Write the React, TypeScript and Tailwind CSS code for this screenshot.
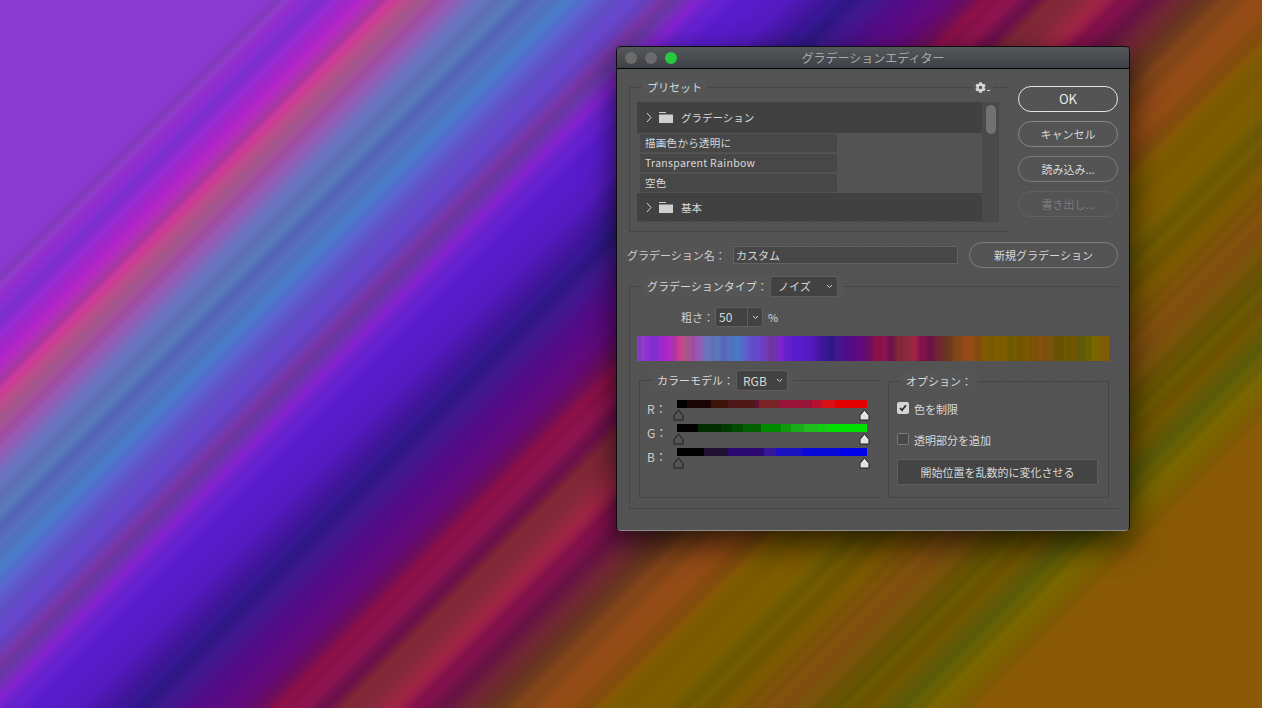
import React from "react";
import { FaCog } from "react-icons/fa";

// noise gradient stops, position is a fraction of the preview bar
const noiseStops: [number, string][] = [
  [0, "#8a3ad0"], [0.012, "#9040c8"], [0.02, "#9a30d8"], [0.035, "#8030d8"], [0.05, "#a02cd8"],
  [0.065, "#b424cc"], [0.078, "#b03ab0"], [0.088, "#cf3a98"], [0.097, "#c0508f"], [0.108, "#b05e98"],
  [0.118, "#a850a8"], [0.132, "#9a62c0"], [0.148, "#6f7ccc"], [0.16, "#6478c4"], [0.172, "#5f80c4"],
  [0.185, "#5a6cc8"], [0.198, "#5a7ccc"], [0.212, "#4c80d0"], [0.226, "#5c68d4"], [0.24, "#6a58d8"],
  [0.255, "#6a4cd8"], [0.268, "#6a40c0"], [0.278, "#7a38a8"], [0.29, "#6e3ab0"], [0.302, "#8a25d8"],
  [0.315, "#6a22d4"], [0.335, "#5a1cd0"], [0.36, "#5a1ccc"], [0.385, "#4a18b0"], [0.408, "#2e188a"],
  [0.425, "#401890"], [0.45, "#5a0c90"], [0.48, "#6a0a80"], [0.496, "#781060"], [0.505, "#90104a"],
  [0.525, "#8f1450"], [0.54, "#701050"], [0.552, "#8a2a3a"], [0.57, "#8f2a40"], [0.586, "#a82848"],
  [0.602, "#8a1050"], [0.622, "#701448"], [0.64, "#7a2a38"], [0.66, "#703a20"], [0.678, "#8a4a18"],
  [0.7, "#a05018"], [0.72, "#8f4f10"], [0.742, "#866200"], [0.77, "#855f00"], [0.79, "#746000"],
  [0.82, "#7c5a00"], [0.86, "#885210"], [0.9, "#6a5a00"], [0.922, "#785a00"], [0.945, "#5c5c08"],
  [0.965, "#7c6a00"], [0.98, "#7e6200"], [1, "#8a5a06"],
];

// the desktop uses the same stops along a 135deg line, starting 268px in and spanning 1418px
const toDesktop = (f: number) => ((268 + 1418 * f) / 1970) * 100;
const toBar = (f: number) => f * 100;

const noiseLayer = (angle: string, at: (f: number) => number) =>
  `linear-gradient(${angle}, ${noiseStops.map(([f, c]) => `${c} ${at(f).toFixed(2)}%`).join(", ")})`;

// fine dark streaks on top of the colour stops, transparent outside the gradient's range
const streakLayer = (angle: string, at: (f: number) => number) => {
  const parts = [`transparent ${at(0).toFixed(2)}%`];
  const count = 150;
  for (let i = 1; i < count; i++) {
    const r = Math.abs(Math.sin(i * 12.9898) * 43758.5453) % 1;
    parts.push(`rgba(0,0,0,${(r * 0.09).toFixed(3)}) ${at(i / count).toFixed(2)}%`);
  }
  parts.push(`transparent ${at(1).toFixed(2)}%`);
  return `linear-gradient(${angle}, ${parts.join(", ")})`;
};

const desktopImage = `${streakLayer("135deg", toDesktop)}, ${noiseLayer("135deg", toDesktop)}`;
const barImage = `${streakLayer("90deg", toBar)}, ${noiseLayer("90deg", toBar)}`;

const bands = (stops: [number, string][]) => {
  const parts: string[] = [];
  let from = 0;
  for (const [to, color] of stops) {
    parts.push(`${color} ${from}% ${to}%`);
    from = to;
  }
  return `linear-gradient(90deg, ${parts.join(", ")})`;
};

const sliders: { label: string; stops: [number, string][] }[] = [
  {
    label: "R",
    stops: [[5, "#000000"], [18, "#1a0505"], [27, "#3a1408"], [41, "#4e1818"], [43, "#5e1038"], [54, "#7a2428"], [71, "#98143a"], [76, "#b81030"], [83, "#d81018"], [100, "#e40000"]],
  },
  {
    label: "G",
    stops: [[11, "#000000"], [23, "#002c00"], [29, "#003a00"], [35, "#004c00"], [44, "#006000"], [55, "#008a00"], [60, "#0f9a0f"], [67, "#1aac1a"], [74, "#20bc20"], [80, "#14cc14"], [100, "#00e000"]],
  },
  {
    label: "B",
    stops: [[14, "#000000"], [27, "#201030"], [46, "#2a0a70"], [52, "#36189a"], [66, "#1a10c0"], [86, "#0808d8"], [100, "#0000e8"]],
  },
];

const Chevron = () => (
  <svg width="7" height="5" viewBox="0 0 7 5" className="shrink-0">
    <path d="M1 1l2.5 2.5L6 1" fill="none" stroke="#d0d0d0" strokeWidth="1" />
  </svg>
);

const FolderRow = ({ name, className }: { name: string; className: string }) => (
  <div className={`flex items-center bg-[#414141] pl-[9px] ${className}`}>
    <svg width="6" height="11" viewBox="0 0 6 11" className="shrink-0">
      <path d="M1 1l4 4.5L1 10" fill="none" stroke="#d8d8d8" strokeWidth="1" />
    </svg>
    <svg width="14" height="11" viewBox="0 0 14 11" className="ml-[7px] shrink-0">
      <path d="M0 0h7v1H0z" fill="#cfcfcf" />
      <path d="M0 2.5h14V11H0z" fill="#cfcfcf" />
    </svg>
    <span className="ml-[8px] text-[10.5px]">{name}</span>
  </div>
);

const PresetItem = ({ name }: { name: string }) => (
  <div className="flex h-[19px] w-[197px] items-center border-b border-[#505050] bg-[#474747] pl-[5px] text-[10.5px] tracking-[0.3px]">
    {name}
  </div>
);

const PillButton = ({ label, className }: { label: string; className: string }) => (
  <div className={`flex items-center justify-center rounded-full border ${className}`}>{label}</div>
);

const Thumb = ({ filled }: { filled: boolean }) => (
  <svg width="11" height="12" viewBox="0 0 11 12" className="shrink-0">
    <path
      d="M5.5 1L10 6.5V11H1V6.5z"
      fill={filled ? "#e2e2e2" : "none"}
      stroke={filled ? "#222222" : "#1c1c1c"}
      strokeWidth="1"
      strokeLinejoin="round"
    />
  </svg>
);

const App: React.FC = () => {
  return (
    <div
      className="relative h-[708px] w-[1262px] overflow-hidden [font-family:'Noto_Sans_CJK_JP','Noto_Sans',sans-serif]"
      style={{ backgroundImage: desktopImage }}
    >
      <div className="absolute left-[616px] top-[46px] flex h-[485px] w-[514px] flex-col overflow-hidden rounded-[5px] border border-[#0c0c0c] border-b-[#8c8c8c] bg-[#535353] bg-[radial-gradient(circle,#575757_1px,transparent_1px)] bg-[length:3px_3px] text-[11px] text-[#d8d8d8] shadow-[0_12px_32px_rgba(0,0,0,0.7)]">
        {/* title bar */}
        <div className="relative flex h-[22px] shrink-0 items-center justify-center border-b border-black bg-gradient-to-b from-[#53575a] to-[#3e4246] text-[12px] text-[#a9a9a9]">
          <div className="absolute left-[8px] top-[5px] flex gap-[8px]">
            <span className="h-[12px] w-[12px] rounded-full bg-[#6b6b6b]" />
            <span className="h-[12px] w-[12px] rounded-full bg-[#6b6b6b]" />
            <span className="h-[12px] w-[12px] rounded-full bg-[#28c840]" />
          </div>
          グラデーションエディター
        </div>

        <div className="flex flex-col pl-[12px]">
          {/* presets and buttons */}
          <div className="mt-[18px] flex">
            <div className="relative h-[145px] w-[380px] border-b border-l border-t border-[#464646] pl-[7px] pt-[14px]">
              <span className="absolute left-[12px] top-[-9px] bg-[#555555] px-[5px] leading-[16px]">プリセット</span>
              <div className="absolute right-[16px] top-[-6px] flex items-end bg-[#555555] px-[3px]">
                <FaCog className="h-[11px] w-[11px] text-[#d8d8d8]" />
                <span className="ml-px mb-[2px] h-px w-[3px] bg-[#d8d8d8]" />
              </div>
              <div className="flex h-[120px] w-[362px] border-b border-r border-[#484848]">
                <div className="flex w-[345px] flex-col">
                  <FolderRow name="グラデーション" className="h-[32px] pt-px" />
                  <div className="flex flex-1 flex-col pl-[3px] pt-px">
                    <PresetItem name="描画色から透明に" />
                    <div className="mt-px">
                      <PresetItem name="Transparent Rainbow" />
                    </div>
                    <div className="mt-px">
                      <PresetItem name="空色" />
                    </div>
                  </div>
                  <FolderRow name="基本" className="h-[29px] pt-[2px]" />
                </div>
                <div className="flex-1 bg-[#4a4a4a] pl-[4px] pt-[3px]">
                  <div className="h-[29px] w-[10px] rounded-full bg-[#727272]" />
                </div>
              </div>
            </div>

            <div className="-mt-px ml-[9px] flex w-[100px] flex-col gap-[9px]">
              <PillButton label="OK" className="h-[26px] border-[#e4e4e4] text-[13px] text-[#ececec]" />
              <PillButton label="キャンセル" className="h-[26px] border-[#868686]" />
              <PillButton label="読み込み..." className="h-[26px] border-[#7a7a7a]" />
              <PillButton label="書き出し..." className="h-[26px] border-[#606060] text-[#7c7c7c]" />
            </div>
          </div>

          {/* gradient name */}
          <div className="-ml-[2px] mt-[10px] flex h-[26px] items-center">
            <span className="w-[106px] text-[#cfcfcf]">グラデーション名：</span>
            <div className="flex h-[18px] w-[225px] items-center border border-[#626262] bg-[#474747] pl-[2px]">カスタム</div>
            <PillButton label="新規グラデーション" className="ml-[11px] h-[26px] w-[149px] border-[#7e7e7e]" />
          </div>

          {/* gradient settings */}
          <div className="relative mt-[18px] h-[223px] w-[490px] border-b border-l border-t border-[#464646]">
            <div className="absolute left-[12px] top-[-11px] flex h-[21px] items-center bg-[#555555] pl-[5px] pr-[5px]">
              <span className="w-[123px]">グラデーションタイプ：</span>
              <div className="flex h-[21px] w-[68px] items-center justify-between rounded-[3px] border border-[#5e5e5e] bg-[#424242] pl-[7px] pr-[4px]">
                ノイズ
                <Chevron />
              </div>
            </div>

            <div className="flex h-[20px] items-center pl-[51px] mt-[20px]">
              <span className="w-[34px] text-[#cfcfcf]">粗さ：</span>
              <div className="flex h-[20px] w-[48px] items-center rounded-[3px] border border-[#5e5e5e] bg-[#424242]">
                <span className="w-[32px] border-r border-[#5e5e5e] pl-[3px] text-[12px] leading-[18px]">50</span>
                <span className="flex flex-1 justify-center">
                  <Chevron />
                </span>
              </div>
              <span className="ml-[5px]">%</span>
            </div>

            <div className="ml-[7px] mt-[9px] h-[25px] w-[472px]" style={{ backgroundImage: barImage }} />

            <div className="ml-[9px] mt-[19px] flex items-start">
              <div className="relative h-[118px] w-[243px] border-b border-l border-t border-[#464646] pl-[7px] pt-[19px]">
                <div className="absolute left-[12px] top-[-11px] flex h-[21px] items-center bg-[#555555] px-[5px]">
                  <span className="w-[79px]">カラーモデル：</span>
                  <div className="flex h-[21px] w-[52px] items-center justify-between rounded-[3px] border border-[#5e5e5e] bg-[#424242] pl-[6px] pr-[4px] text-[12px]">
                    RGB
                    <Chevron />
                  </div>
                </div>
                {sliders.map((s) => (
                  <div key={s.label} className="flex h-[24px] items-start">
                    <span className="w-[30px] text-[12px] leading-[18px] text-[#cfcfcf]">{s.label}：</span>
                    <div className="w-[190px]">
                      <div className="h-[8px]" style={{ backgroundImage: bands(s.stops) }} />
                      <div className="-ml-[4px] flex w-[197px] justify-between pt-[1px]">
                        <Thumb filled={false} />
                        <Thumb filled />
                      </div>
                    </div>
                  </div>
                ))}
              </div>

              <div className="relative ml-[6px] mt-px flex h-[117px] w-[221px] flex-col border border-[#464646] px-[8px]">
                <span className="absolute left-[12px] top-[-9px] bg-[#555555] px-[5px] leading-[16px]">オプション：</span>
                <div className="mt-[20px] flex h-[12px] items-center">
                  <span className="flex h-[12px] w-[12px] items-center justify-center rounded-[2px] bg-[#d4d4d4]">
                    <svg width="8" height="8" viewBox="0 0 8 8">
                      <path d="M1 4l2 2.2L7 1.2" fill="none" stroke="#2a2a2a" strokeWidth="1.8" />
                    </svg>
                  </span>
                  <span className="ml-[5px] mt-[2px]">色を制限</span>
                </div>
                <div className="mt-[19px] flex h-[12px] items-center">
                  <span className="h-[12px] w-[12px] rounded-[2px] border border-[#7a7a7a] bg-[#484848]" />
                  <span className="ml-[5px] mt-[2px]">透明部分を追加</span>
                </div>
                <div className="mt-[14px] flex h-[26px] w-[201px] items-center justify-center border border-[#5e5e5e] bg-[#444444]">
                  開始位置を乱数的に変化させる
                </div>
              </div>
            </div>
          </div>
        </div>
      </div>
    </div>
  );
};

export default App;
